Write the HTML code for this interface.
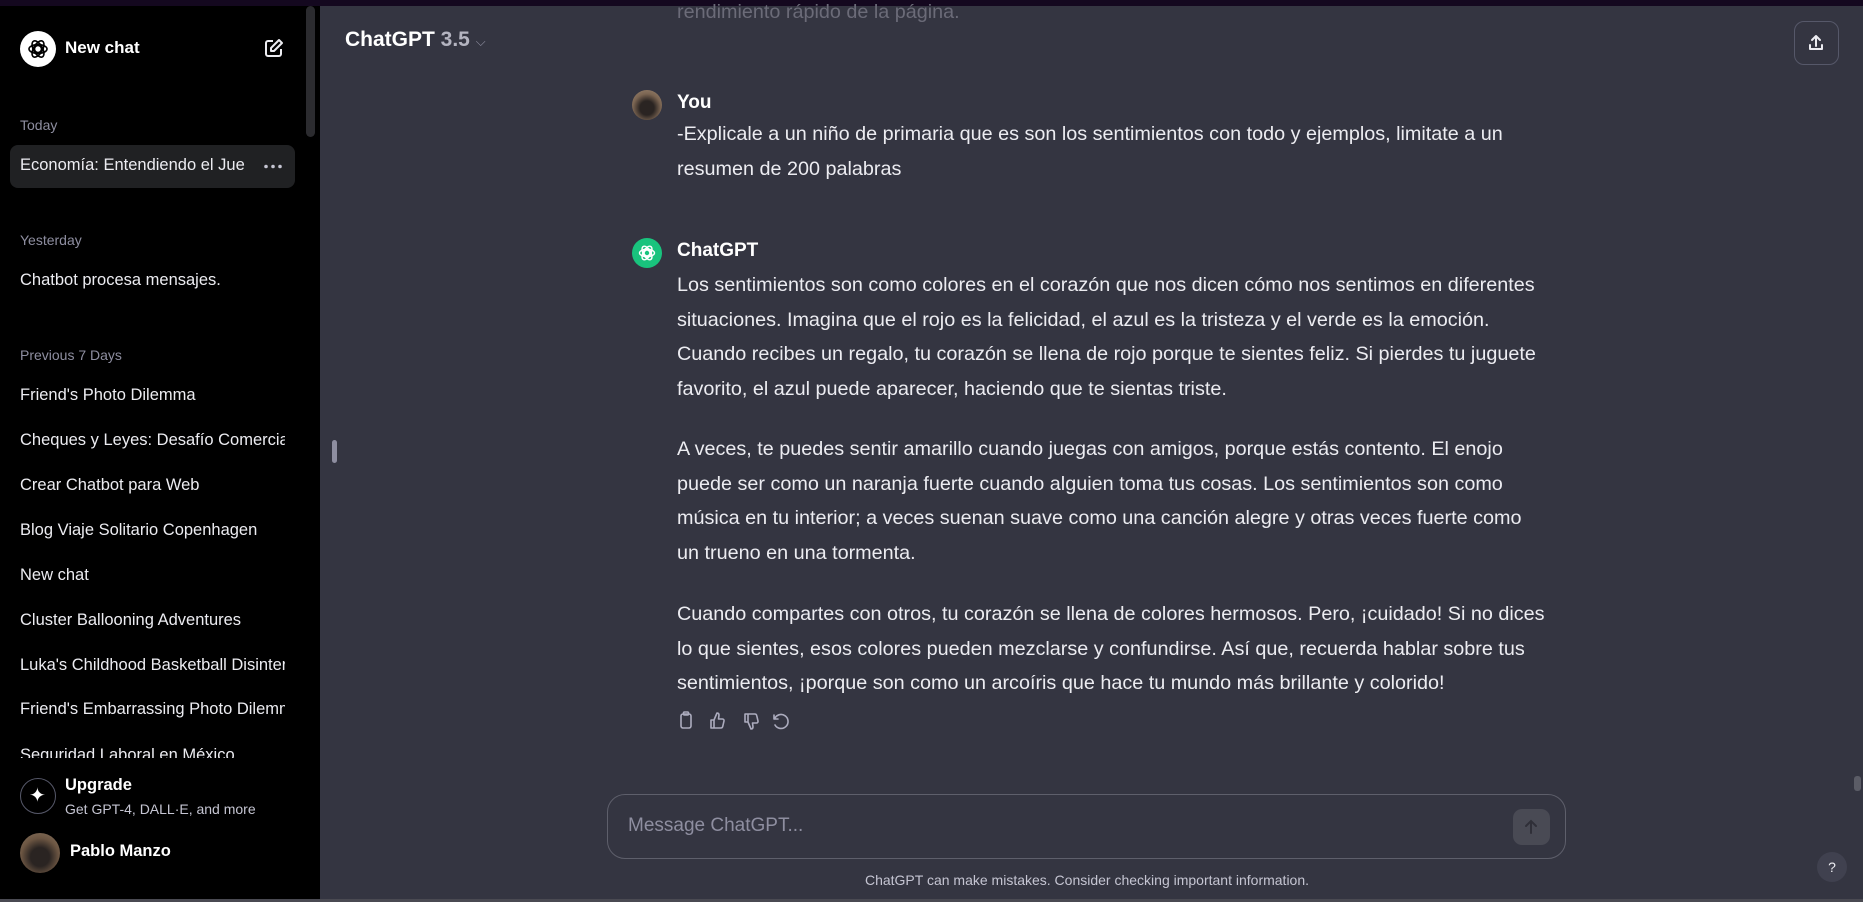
<!DOCTYPE html>
<html><head><meta charset="utf-8"><style>
*{margin:0;padding:0;box-sizing:border-box}
html,body{width:1863px;height:902px;overflow:hidden;background:#343541;font-family:"Liberation Sans",sans-serif;color:#ececf1}
.top{position:absolute;left:0;top:0;width:1863px;height:6px;background:#14081f}
.side{position:absolute;left:0;top:6px;width:320px;height:893px;background:#000}
.bot{position:absolute;left:0;top:899px;width:1863px;height:3px;background:#4a4a52}
.abs{position:absolute;white-space:nowrap}
.sec{font-size:14px;color:#8e8ea0;left:20px}
.it{font-size:16.5px;color:#ececf1;left:20px;width:265px;overflow:hidden}
.main{position:absolute;left:320px;top:6px;width:1543px;height:893px;background:#343541}
.msg{font-size:19.8px;line-height:34.5px;color:#ececf1}
</style></head><body>
<div class="top"></div>
<div class="side">
 <div class="abs" style="left:20px;top:25px;width:36px;height:36px;border-radius:50%;background:#fff"></div>
 <svg class="abs" style="left:26px;top:31px" width="24" height="24" viewBox="0 0 24 24" fill="none" stroke="#000" stroke-width="1.6"><circle cx="12" cy="12" r="3.5"/><ellipse cx="12" cy="12" rx="9" ry="4.5"/><ellipse cx="12" cy="12" rx="9" ry="4.5" transform="rotate(60 12 12)"/><ellipse cx="12" cy="12" rx="9" ry="4.5" transform="rotate(120 12 12)"/></svg>
 <div class="abs" style="left:65px;top:32px;font-size:17px;font-weight:bold;color:#fff">New chat</div>
 <svg class="abs" style="left:264px;top:32px" width="20" height="20" viewBox="0 0 20 20" fill="none" stroke="#ececf1" stroke-width="2" stroke-linejoin="round"><path d="M9 3H4a2 2 0 0 0-2 2v11a2 2 0 0 0 2 2h11a2 2 0 0 0 2-2v-5"/><path d="M15 2l3 3-8 8H7v-3z"/></svg>
 <div class="abs" style="left:306px;top:0;width:9px;height:131px;border-radius:5px;background:#2b2b2f"></div>
 <div class="abs sec" style="top:111px">Today</div>
 <div class="abs" style="left:10px;top:139px;width:285px;height:43px;border-radius:8px;background:#202123"></div>
 <div class="abs it" style="top:150px;width:235px">Economía: Entendiendo el Jue</div>
 <svg class="abs" style="left:263px;top:158px" width="20" height="5" viewBox="0 0 20 5" fill="#c5c5d2"><circle cx="3" cy="2.5" r="1.8"/><circle cx="10" cy="2.5" r="1.8"/><circle cx="17" cy="2.5" r="1.8"/></svg>
 <div class="abs sec" style="top:226px">Yesterday</div>
 <div class="abs it" style="top:265px">Chatbot procesa mensajes.</div>
 <div class="abs sec" style="top:341px">Previous 7 Days</div>
 <div class="abs it" style="top:380px">Friend's Photo Dilemma</div>
 <div class="abs it" style="top:425px">Cheques y Leyes: Desafío Comercial</div>
 <div class="abs it" style="top:470px">Crear Chatbot para Web</div>
 <div class="abs it" style="top:515px">Blog Viaje Solitario Copenhagen</div>
 <div class="abs it" style="top:560px">New chat</div>
 <div class="abs it" style="top:605px">Cluster Ballooning Adventures</div>
 <div class="abs it" style="top:650px">Luka's Childhood Basketball Disinterest</div>
 <div class="abs it" style="top:694px">Friend's Embarrassing Photo Dilemma</div>
 <div class="abs" style="left:0;top:740px;width:320px;height:12px;overflow:hidden"><div class="abs it" style="top:0">Seguridad Laboral en México</div></div>
 <div class="abs" style="left:20px;top:772px;width:36px;height:36px;border-radius:50%;border:1px solid #565869"></div>
 <div class="abs" style="left:29px;top:777px;font-size:20px;color:#fff">✦</div>
 <div class="abs" style="left:65px;top:770px;font-size:16.5px;font-weight:bold;color:#fff">Upgrade</div>
 <div class="abs" style="left:65px;top:795px;font-size:14px;color:#c5c5d2">Get GPT-4, DALL·E, and more</div>
 <div class="abs" style="left:20px;top:827px;width:40px;height:40px;border-radius:50%;background:radial-gradient(circle at 50% 60%,#2a2422 30%,#6b5542 60%,#8a7560)"></div>
 <div class="abs" style="left:70px;top:836px;font-size:16.5px;font-weight:bold;color:#fff">Pablo Manzo</div>
</div>
<div class="main">
 <div class="abs" style="left:357px;top:-5px;font-size:19.8px;color:#6b6b78">rendimiento rápido de la página.</div>
 <div class="abs" style="left:25px;top:22px;font-size:21px;font-weight:bold;color:#fff">ChatGPT <span style="color:#b4b4c0">3.5</span> <span style="font-size:13px;color:#8e8ea0;font-weight:normal">⌵</span></div>
 <div class="abs" style="left:1474px;top:15px;width:45px;height:44px;border:1px solid #565869;border-radius:10px"></div>
 <svg class="abs" style="left:1486px;top:27px" width="20" height="20" viewBox="0 0 20 20" fill="none" stroke="#ececf1" stroke-width="2" stroke-linecap="round" stroke-linejoin="round"><path d="M10 13V3M6 7l4-4 4 4M4 12v4h12v-4"/></svg>
 <div class="abs" style="left:12px;top:434px;width:5px;height:23px;border-radius:3px;background:#8e8ea0"></div>
 <div class="abs" style="left:312px;top:84px;width:30px;height:30px;border-radius:50%;background:radial-gradient(circle at 50% 60%,#2a2422 30%,#7b6552 60%,#a08a73)"></div>
 <div class="abs" style="left:357px;top:86px;font-size:19px;font-weight:bold;color:#fff">You</div>
 <div class="abs msg" style="left:357px;top:111px">-Explicale a un niño de primaria que es son los sentimientos con todo y ejemplos, limitate a un<br>resumen de 200 palabras</div>
 <div class="abs" style="left:312px;top:232px;width:30px;height:30px;border-radius:50%;background:#19c37d"></div>
 <svg class="abs" style="left:317px;top:237px" width="20" height="20" viewBox="0 0 24 24" fill="none" stroke="#fff" stroke-width="1.7"><circle cx="12" cy="12" r="3.5"/><ellipse cx="12" cy="12" rx="9" ry="4.5"/><ellipse cx="12" cy="12" rx="9" ry="4.5" transform="rotate(60 12 12)"/><ellipse cx="12" cy="12" rx="9" ry="4.5" transform="rotate(120 12 12)"/></svg>
 <div class="abs" style="left:357px;top:234px;font-size:19px;font-weight:bold;color:#fff">ChatGPT</div>
 <div class="abs msg" style="left:357px;top:262px">Los sentimientos son como colores en el corazón que nos dicen cómo nos sentimos en diferentes<br>situaciones. Imagina que el rojo es la felicidad, el azul es la tristeza y el verde es la emoción.<br>Cuando recibes un regalo, tu corazón se llena de rojo porque te sientes feliz. Si pierdes tu juguete<br>favorito, el azul puede aparecer, haciendo que te sientas triste.</div>
 <div class="abs msg" style="left:357px;top:426px">A veces, te puedes sentir amarillo cuando juegas con amigos, porque estás contento. El enojo<br>puede ser como un naranja fuerte cuando alguien toma tus cosas. Los sentimientos son como<br>música en tu interior; a veces suenan suave como una canción alegre y otras veces fuerte como<br>un trueno en una tormenta.</div>
 <div class="abs msg" style="left:357px;top:591px">Cuando compartes con otros, tu corazón se llena de colores hermosos. Pero, ¡cuidado! Si no dices<br>lo que sientes, esos colores pueden mezclarse y confundirse. Así que, recuerda hablar sobre tus<br>sentimientos, ¡porque son como un arcoíris que hace tu mundo más brillante y colorido!</div>
 <svg class="abs" style="left:358px;top:704px" width="120" height="22" viewBox="0 0 120 22" fill="none" stroke="#acacbe" stroke-width="1.6" stroke-linecap="round" stroke-linejoin="round">
  <rect x="3" y="4" width="10" height="14" rx="2"/><rect x="5.5" y="2" width="5" height="3" rx="1"/>
  <path d="M36 10v8h-3v-8zM36 10l3-7c1.5 0 2 1 2 2l-.5 4h4c1 0 1.7 1 1.5 2l-1.3 5.5c-.2 1-1 1.5-2 1.5H36"/>
  <path d="M70 12V4h-3v8zM70 12l3 7c1.5 0 2-1 2-2l-.5-4h4c1 0 1.7-1 1.5-2l-1.3-5.5c-.2-1-1-1.5-2-1.5H70"/>
  <path d="M96 5v4h4M96.5 9A7 7 0 1 1 97 15"/>
 </svg>
 <div class="abs" style="left:287px;top:788px;width:959px;height:65px;border:1px solid #5e5f6b;border-radius:18px"></div>
 <div class="abs" style="left:308px;top:809px;font-size:19px;color:#8e8ea0">Message ChatGPT...</div>
 <div class="abs" style="left:1193px;top:803px;width:37px;height:36px;border-radius:9px;background:#494a54"></div>
 <svg class="abs" style="left:1201px;top:811px" width="20" height="20" viewBox="0 0 20 20" fill="none" stroke="#2f2f38" stroke-width="2" stroke-linecap="round"><path d="M10 16V4M5 9l5-5 5 5"/></svg>
 <div class="abs" style="left:0;top:866px;width:1534px;text-align:center;font-size:14px;color:#c5c5d2">ChatGPT can make mistakes. Consider checking important information.</div>
 <div class="abs" style="left:1497px;top:846px;width:30px;height:30px;border-radius:50%;background:#40414f;color:#ececf1;font-size:14px;text-align:center;line-height:30px">?</div>
 <div class="abs" style="left:1534px;top:770px;width:7px;height:15px;border-radius:3px;background:#5b5c66"></div>
</div>
<div class="bot"></div>
</body></html>
